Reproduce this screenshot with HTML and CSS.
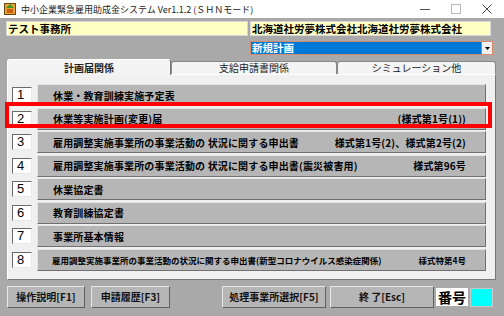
FILE: index.html
```html
<!DOCTYPE html>
<html lang="ja">
<head>
    <meta charset="UTF-8">
    <title>中小企業緊急雇用助成金システム</title>
    <link rel="stylesheet" href="styles.css">
</head>
<body>
    <!-- Title bar -->
    <div class="titlebar">
        <svg class="app-icon" width="12" height="12" viewBox="0 0 12 12">
            <rect x="0.5" y="0.5" width="11" height="11" fill="#e8a030" stroke="#6a4a10"/>
            <path d="M2 5 L6 1 L10 5 Z" fill="#3f9a2a"/>
            <rect x="3" y="6" width="6" height="4" fill="#c86010"/>
        </svg>
        <span class="title">中小企業緊急雇用助成金システム Ver1.1.2 (ＳＨＮモード)</span>
        <div class="controls">
            <svg width="10" height="10" viewBox="0 0 10 10"><line x1="0" y1="5.5" x2="10" y2="5.5" stroke="#555"/></svg>
            <svg width="10" height="10" viewBox="0 0 10 10"><rect x="0.5" y="0.5" width="9" height="9" fill="none" stroke="#bbb"/></svg>
            <svg width="10" height="10" viewBox="0 0 10 10"><path d="M0.5 0.5 L9.5 9.5 M9.5 0.5 L0.5 9.5" stroke="#444"/></svg>
        </div>
    </div>

    <div class="form">
        <div class="info-row">
            <div class="field office">テスト事務所</div>
            <div class="field company">北海道社労夢株式会社北海道社労夢株式会社</div>
        </div>
        <div class="combo-row">
            <div class="combo">
                <span class="combo-text">新規計画</span>
                <span class="combo-btn">
                    <svg width="5" height="3" viewBox="0 0 5 3"><path d="M0 0 H5 L2.5 3 Z" fill="#000"/></svg>
                </span>
            </div>
        </div>

        <!-- Tabs -->
        <div class="tabs">
            <div class="tab active">計画届関係</div>
            <div class="tab">支給申請書関係</div>
            <div class="tab last">シミュレーション他</div>
        </div>

        <div class="panel">
            <div class="row"><div class="num">1</div><div class="bar"><span>休業・教育訓練実施予定表</span></div></div>
            <div class="row"><div class="num">2</div><div class="bar"><span>休業等実施計画(変更)届</span><span class="form-no">(様式第1号(1))</span></div></div>
            <div class="row"><div class="num">3</div><div class="bar"><span>雇用調整実施事業所の事業活動の 状況に関する申出書</span><span class="form-no">様式第1号(2)、様式第2号(2)</span></div></div>
            <div class="row"><div class="num">4</div><div class="bar"><span>雇用調整実施事業所の事業活動の 状況に関する申出書(震災被害用)</span><span class="form-no">様式第96号</span></div></div>
            <div class="row"><div class="num">5</div><div class="bar"><span>休業協定書</span></div></div>
            <div class="row"><div class="num">6</div><div class="bar"><span>教育訓練協定書</span></div></div>
            <div class="row"><div class="num">7</div><div class="bar"><span>事業所基本情報</span></div></div>
            <div class="row"><div class="num">8</div><div class="bar small"><span>雇用調整実施事業所の事業活動の状況に関する申出書(新型コロナウイルス感染症関係)</span><span class="form-no">様式特第4号</span></div></div>
        </div>

        <!-- Bottom buttons -->
        <div class="buttons">
            <div class="btn w1">操作説明[F1]</div>
            <div class="btn w2">申請履歴[F3]</div>
            <div class="spacer"></div>
            <div class="btn w3">処理事業所選択[F5]</div>
            <div class="btn w3">終 了[Esc]</div>
            <div class="no-label">番号</div>
            <div class="no-box"></div>
        </div>

        <div class="highlight"></div>
    </div>
</body>
</html>
```

FILE: styles.css
```css
body {
    margin: 0;
    width: 504px;
    height: 316px;
    overflow: hidden;
    background-color: #a9a9a9;
    font-family: "Noto Sans CJK JP", "Liberation Sans", sans-serif;
    color: #000;
}

.titlebar {
    height: 18px;
    background-color: #fff;
    display: flex;
    align-items: center;
}
.app-icon {
    margin-left: 4px;
    margin-right: 5px;
}
.title {
    font-size: 9px;
    color: #222;
    white-space: nowrap;
}
.controls {
    margin-left: auto;
    display: flex;
    gap: 21px;
    margin-right: 12px;
}

.form {
    position: relative;
    height: 298px;
}

.info-row {
    display: flex;
    gap: 2px;
    padding: 3px 0 0 6px;
}
.field {
    height: 15px;
    background-color: #ffffc4;
    border: 1px solid #d8d8d8;
    box-sizing: border-box;
    font-size: 10.5px;
    line-height: 13px;
    font-weight: bold;
    padding-left: 1px;
    white-space: nowrap;
}
.office { width: 242px; }
.company { width: 241px; }

.combo-row {
    padding: 5px 0 0 250px;
}
.combo {
    width: 243px;
    height: 14px;
    box-sizing: border-box;
    border: 1px solid #d88a6a;
    background-color: #0078d7;
    display: flex;
    align-items: center;
}
.combo-text {
    color: #fff;
    font-size: 10.5px;
    font-weight: bold;
    padding-left: 1px;
    line-height: 12px;
}
.combo-btn {
    margin-left: auto;
    width: 10px;
    height: 12px;
    background-color: #f0f0f0;
    border-left: 1px solid #888;
    display: flex;
    align-items: center;
    justify-content: center;
}

.tabs {
    display: flex;
    align-items: flex-end;
    margin: 3px 0 0 7px;
    height: 16px;
}
.tab {
    height: 12px;
    line-height: 12px;
    font-size: 10px;
    text-align: center;
    background-color: #f4f4f4;
    border: 1px solid #888;
    border-bottom: none;
    border-radius: 3px 3px 0 0;
    color: #222;
    width: 164px;
}
.tab.active {
    height: 15px;
    line-height: 15px;
    width: 162px;
    font-weight: bold;
    border-color: #fff #777 #777 #fff;
    position: relative;
    z-index: 1;
    margin-bottom: -1px;
}
.tab.last {
    width: 157px;
}

.panel {
    margin-left: 7px;
    width: 489px;
    height: 206px;
    box-sizing: border-box;
    background-color: #f0f0f0;
    border: 1px solid;
    border-color: #fff #777 #777 #fff;
    padding: 9px 9px 0 4px;
    display: flex;
    flex-direction: column;
    gap: 1.5px;
}
.row {
    display: flex;
    align-items: center;
    gap: 5px;
    height: 22px;
}
.num {
    width: 20px;
    height: 16px;
    box-sizing: border-box;
    background-color: #fff;
    border: 1px solid;
    border-color: #6a6a6a #e8e8e8 #e8e8e8 #6a6a6a;
    font-family: "Liberation Sans", sans-serif;
    font-size: 13px;
    line-height: 14px;
    padding-left: 4px;
}
.bar {
    flex: 1;
    height: 22px;
    box-sizing: border-box;
    background-color: #b6b6b6;
    border: 1px solid;
    border-color: #e4e4e4 #707070 #707070 #e4e4e4;
    display: flex;
    align-items: center;
    padding: 0 19px 0 15px;
    font-size: 10px;
    letter-spacing: 0.15px;
    font-weight: bold;
    white-space: nowrap;
}
.bar.small {
    font-size: 8.5px;
    letter-spacing: 0;
    padding-left: 14px;
}
.form-no {
    margin-left: auto;
}

.buttons {
    display: flex;
    align-items: center;
    margin: 6px 0 0 7px;
    height: 22px;
}
.btn {
    height: 22px;
    box-sizing: border-box;
    background-color: #b6b6b6;
    border: 1px solid;
    border-color: #e8e8e8 #606060 #606060 #e8e8e8;
    font-size: 10px;
    font-weight: bold;
    line-height: 20px;
    text-align: center;
    color: #111;
}
.w1 { width: 78px; margin-right: 6px; }
.w2 { width: 79px; }
.spacer { width: 52px; }
.w3 { width: 104px; margin-right: 4px; }
.no-label {
    width: 32px;
    height: 18px;
    margin-left: -2px;
    background-color: #fff;
    font-size: 14px;
    font-weight: bold;
    line-height: 18px;
    text-align: center;
}
.no-box {
    width: 21px;
    height: 17px;
    margin-left: 2px;
    background-color: #00ffff;
    border: 1px solid #c8c8c8;
}

.highlight {
    position: absolute;
    left: 5px;
    top: 84px;
    width: 487px;
    height: 26px;
    box-sizing: border-box;
    border: 4px solid #ff0000;
}
```
